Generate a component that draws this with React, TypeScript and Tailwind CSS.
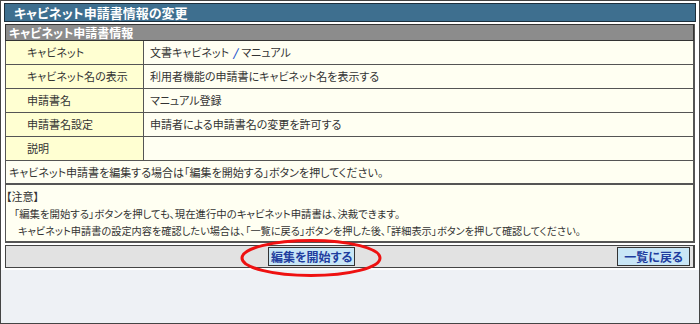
const rows: [string, React.ReactNode][] = [
  [
    'キャビネット',
    <>
      文書キャビネット <span className="mx-[4px] font-bold italic text-[#2255cc]">/</span> マニュアル
    </>,
  ],
  ['キャビネット名の表示', '利用者機能の申請書にキャビネット名を表示する'],
  ['申請書名', 'マニュアル登録'],
  ['申請書名設定', '申請者による申請書名の変更を許可する'],
  ['説明', ''],
];

export default function App() {
  return (
    <div className="w-[700px] h-[324px] border border-[#444] bg-[#eef1f5] overflow-hidden relative font-['Noto_Sans_CJK_JP',sans-serif] [font-feature-settings:'palt'] text-[#333]">
      <div className="bg-white px-[3px] pt-[2px] pb-[2px]">
        <div className="h-[19px] bg-[#3e6f8f] border border-[#1d2f3c] flex items-center pl-[9px] text-white font-bold text-[13px] leading-none">
          キャビネット申請書情報の変更
        </div>
        <div className="mx-[1px] mt-[2px] border-l border-r-2 border-[#555]">
          <div className="h-[17px] bg-[#8c8c8c] border border-[#333] -mx-px flex items-center pl-[3px] text-white font-bold text-[12px] leading-none">
            キャビネット申請書情報
          </div>
          {rows.map(([label, value]) => (
            <div key={label} className="grid grid-cols-[138px_1fr] h-[24px] border-b border-[#555] text-[11px]">
              <div className="bg-[#ffffd2] border-r border-[#555] flex items-center pl-[21px]">{label}</div>
              <div className="bg-[#fffff2] flex items-center pl-[6px]">{value}</div>
            </div>
          ))}
          <div className="h-[24px] bg-[#fffff2] border-b-2 border-[#555] flex items-center pl-[3px] text-[11px]">
            キャビネット申請書を編集する場合は「編集を開始する」ボタンを押してください。
          </div>
          <div className="h-[58px] bg-[#fffff2] border-b-2 border-[#555] text-[11px] leading-[17px] pt-[3px]">
            <div>【注意】</div>
            <div className="pl-[8px] text-[10.4px]">「編集を開始する」ボタンを押しても、現在進行中のキャビネット申請書は、決裁できます。</div>
            <div className="pl-[12px] text-[10.2px]">キャビネット申請書の設定内容を確認したい場合は、「一覧に戻る」ボタンを押した後、「詳細表示」ボタンを押して確認してください。</div>
          </div>
        </div>
        <div className="mx-[1px] mt-[2px] h-[23px] bg-[#e2e2e2] border border-[#444] border-r-2 flex items-center justify-between pl-[262px] pr-[3px]">
          <button className="h-[19px] px-[2px] bg-[#c9e6f6] border border-[#333] text-[#1e3d9e] font-bold text-[12px] leading-none">
            編集を開始する
          </button>
          <button className="h-[19px] px-[6px] bg-[#c9e6f6] border border-[#333] text-[#1e3d9e] font-bold text-[12px] leading-none">
            一覧に戻る
          </button>
        </div>
      </div>
      <svg className="absolute left-[238px] top-[237px]" width="144" height="40" viewBox="0 0 144 40">
        <ellipse cx="72" cy="20" rx="69" ry="17.5" fill="none" stroke="#ee1111" strokeWidth="3" />
      </svg>
    </div>
  );
}
